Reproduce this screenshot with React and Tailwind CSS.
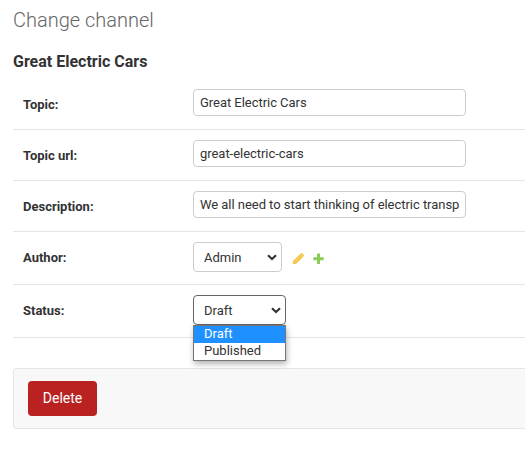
function Row({ label, tall, children }) {
  return (
    <div className={`flex items-start border-b border-[#e5e5e5] pl-[10px] pt-[10px] ${tall ? 'h-[53px]' : 'h-[51px]'}`}>
      <label className="w-[170px] shrink-0 pt-[8px] text-[13px] font-bold leading-[15px] text-[#333]">{label}</label>
      {children}
    </div>
  );
}

function TextField({ value }) {
  return (
    <div className="h-[27px] w-[273px] shrink-0 rounded border border-[#ccc] bg-white px-[6px]">
      <div className="h-[25px] overflow-hidden whitespace-nowrap text-[13px] leading-[25px] tracking-[-0.04px] text-[#333]">{value}</div>
    </div>
  );
}

function Chevron() {
  return (
    <svg className="mr-[4px]" width="10" height="7" viewBox="0 0 10 7" fill="none">
      <path d="M1 1.2 5 5 9 1.2" stroke="#333" strokeWidth="2.1" />
    </svg>
  );
}

function Pencil() {
  return (
    <svg width="13" height="13" viewBox="0 0 13 13">
      <path d="M1.2 8.8 8.6 1.5Q9.6.7 10.6 1.6L11.5 2.5Q12.3 3.5 11.5 4.5L4.2 11.8.8 12.2Z" fill="#f3c445" />
      <path d="M2.7 9.9 8.2 4.4" stroke="#fae29c" strokeWidth="0.8" />
      <path d="M8.3 2.2 10.9 4.8" stroke="#fae8b5" strokeWidth="0.7" />
    </svg>
  );
}

function Plus() {
  return (
    <svg width="13" height="13" viewBox="0 0 13 13" fill="#8ccb57">
      <path d="M5 1.5h3v3.7h3.7v3H8v3.7H5V8.2H1.3v-3H5z" />
    </svg>
  );
}

export default function App() {
  return (
    <div className="h-[472px] w-full overflow-hidden bg-white pl-[13px] font-[Roboto,'Liberation_Sans',sans-serif] text-[#333]">
      <h1 className="pt-[8px] text-[20px] font-light leading-[24px] text-[#666]">Change channel</h1>
      <h2 className="mt-[20px] h-[27px] text-[16px] font-bold leading-[19px]">Great Electric Cars</h2>
      <Row label="Topic:"><TextField value="Great Electric Cars" /></Row>
      <Row label="Topic url:"><TextField value="great-electric-cars" /></Row>
      <Row label="Description:"><TextField value="We all need to start thinking of electric transp" /></Row>
      <Row label="Author:" tall>
        <div className="flex h-[30px] w-[89px] items-center justify-between rounded border border-[#ccc] pl-[10px] text-[13px]">
          <span className="pt-[2px]">Admin</span>
          <Chevron />
        </div>
        <div className="ml-[10px] mt-[10px] flex gap-[7px]">
          <Pencil />
          <Plus />
        </div>
      </Row>
      <Row label="Status:" tall>
        <div className="relative">
          <div className="flex h-[30px] w-[93px] items-center justify-between rounded border border-[#666] bg-white pl-[10px] text-[13px]">
            <span className="pt-[2px]">Draft</span>
            <Chevron />
          </div>
          <div className="absolute left-0 top-[30px] z-10 h-[36px] w-[93px] border border-[#767676] bg-white text-[13px] shadow-[1px_3px_6px_rgba(0,0,0,0.3)]">
            <div className="h-[17px] bg-[#1e90ff] pl-[10px] leading-[15px] text-white">Draft</div>
            <div className="h-[17px] pl-[10px] leading-[15px]">Published</div>
          </div>
        </div>
      </Row>
      <div className="mt-[30px] h-[61px] rounded-l border border-r-0 border-[#e5e5e5] bg-[#f8f8f8] pl-[14px] pt-[12px]">
        <button className="h-[35px] w-[69px] rounded bg-[#ba2121] text-[14px] text-white">Delete</button>
      </div>
    </div>
  );
}
